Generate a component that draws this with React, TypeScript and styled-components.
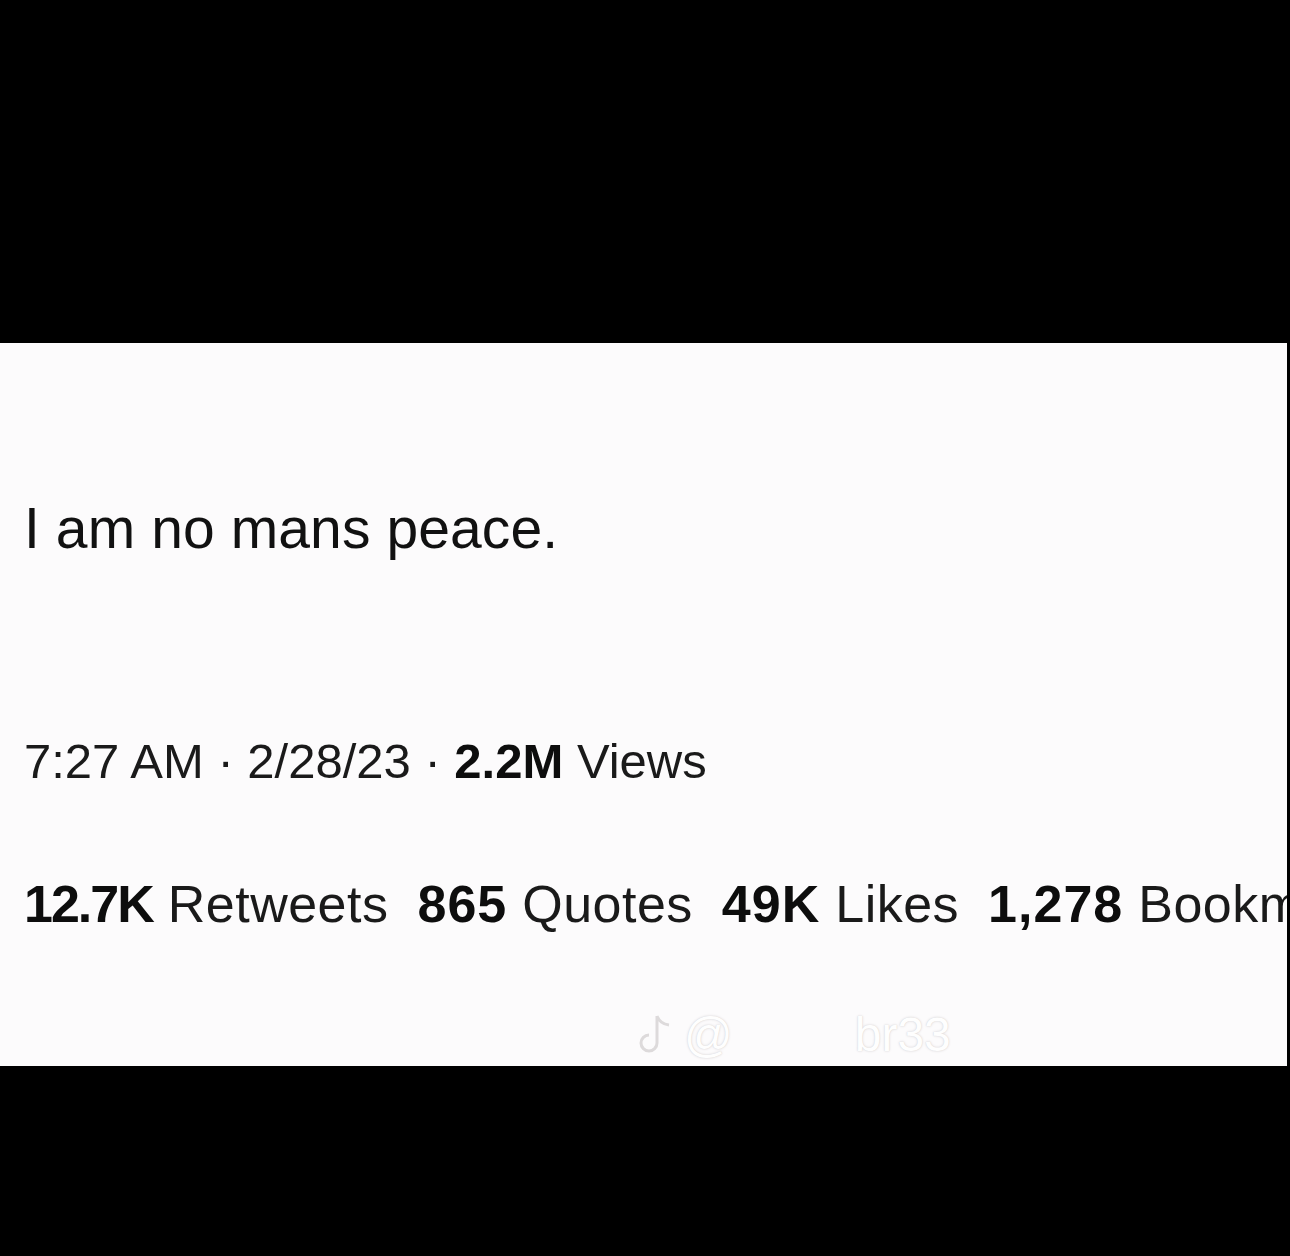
import React from "react";
import styled, { createGlobalStyle } from "styled-components";

const Global = createGlobalStyle`
  html, body { margin: 0; padding: 0; background: #000; }
  body { font-family: "Liberation Sans", Arial, sans-serif; }
`;

const Page = styled.div`
  width: 1290px;
  height: 1256px;
  background: #000;
  padding-top: 343px;
  box-sizing: border-box;
  overflow: hidden;
`;

const Panel = styled.div`
  position: relative;
  width: 1287px;
  height: 723px;
  background: #fcfbfc;
  box-sizing: border-box;
  padding: 157px 0 0 24px;
  display: flex;
  flex-direction: column;
  overflow: hidden;
  color: #111;
`;

const Tweet = styled.div`
  font-size: 57px;
  line-height: 57px;
  letter-spacing: 0.1px;
  white-space: nowrap;
`;

const Meta = styled.div`
  margin-top: 180px;
  font-size: 49px;
  line-height: 49px;
  color: #1a1a1a;
  white-space: nowrap;
`;

const Stats = styled.div`
  margin-top: 92px;
  font-size: 52px;
  line-height: 52px;
  display: flex;
  gap: 29px;
  white-space: nowrap;
`;

const Stat = styled.span`
  color: #1a1a1a;
  letter-spacing: 0.5px;
`;

const B = styled.b<{ $spacing?: number }>`
  font-weight: 700;
  color: #0d0d0d;
  letter-spacing: ${(p) => (p.$spacing ?? 0)}px;
`;

const Watermark = styled.div`
  position: absolute;
  left: 636px;
  top: 664px;
  display: flex;
  align-items: center;
  gap: 10px;
  font-size: 48px;
  color: #fefefe;
  text-shadow: 0 0 1px #d3d0d1, 0 0 3px #e0dddf;
  white-space: nowrap;
`;

const Handle = styled.span`
  margin-left: 112px;
`;

export default function App() {
  return (
    <>
      <Global />
      <Page>
        <Panel>
          <Tweet>I am no mans peace.</Tweet>
          <Meta>
            7:27 AM · 2/28/23 · <B>2.2M</B> Views
          </Meta>
          <Stats>
            <Stat><B $spacing={-2}>12.7K</B> Retweets</Stat>
            <Stat><B $spacing={1}>865</B> Quotes</Stat>
            <Stat><B $spacing={1}>49K</B> Likes</Stat>
            <Stat><B $spacing={1}>1,278</B> Bookmarks</Stat>
          </Stats>
          <Watermark>
            <svg width="38" height="46" viewBox="0 0 38 46" fill="none" stroke="#dddadb" strokeWidth="3">
              <path d="M21 4 V31 a8 8 0 1 1 -8 -8 M21 4 q3 8 12 9" />
            </svg>
            <span>@</span>
            <Handle>br33</Handle>
          </Watermark>
        </Panel>
      </Page>
    </>
  );
}
